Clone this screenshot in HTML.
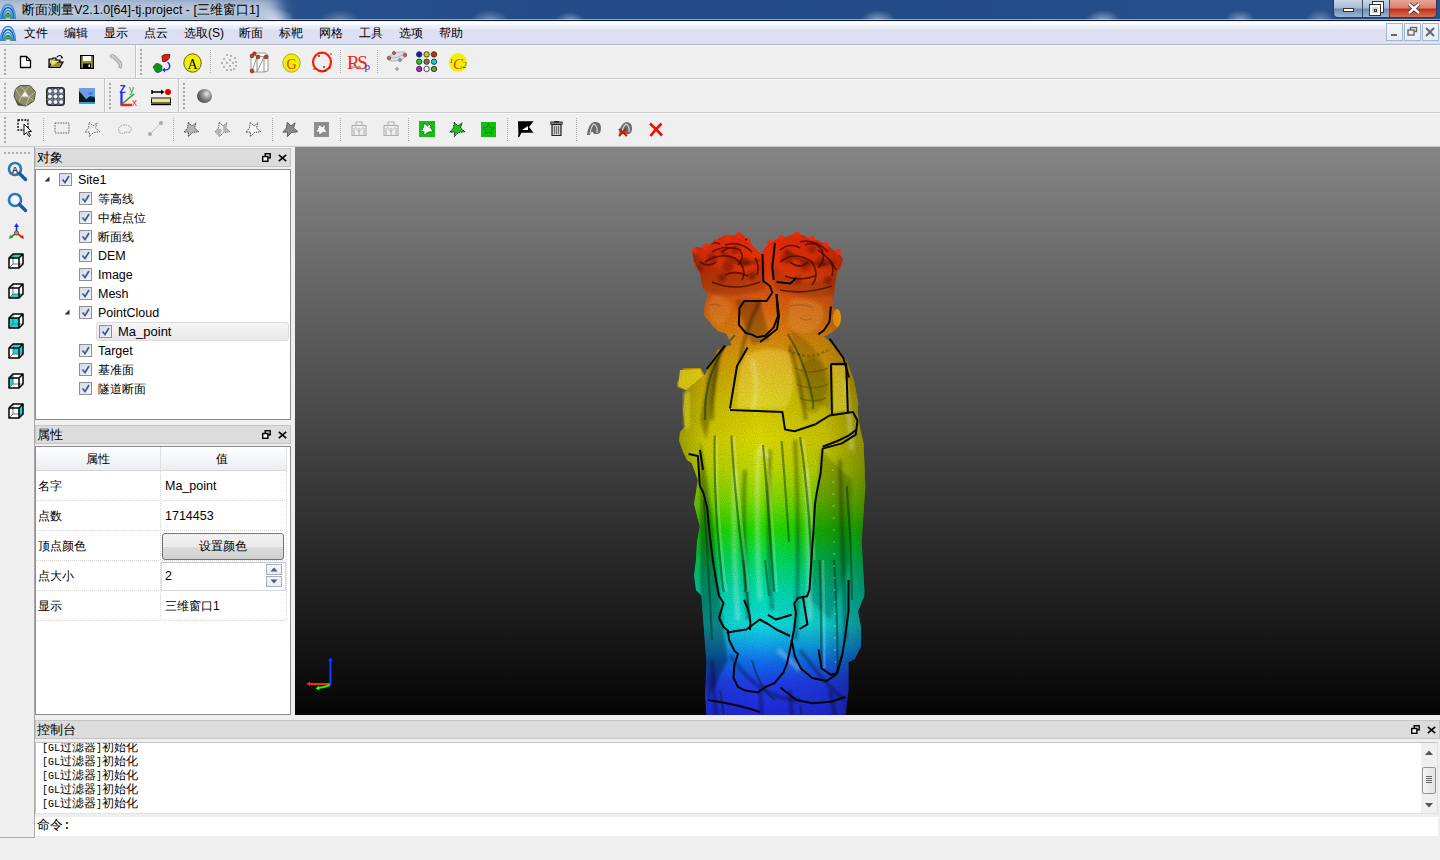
<!DOCTYPE html><html><head><meta charset="utf-8"><style>*{box-sizing:border-box;margin:0;padding:0}
html,body{width:1440px;height:860px;overflow:hidden;background:#efefef;font-family:"Liberation Sans",sans-serif;font-size:12px;color:#000}
.a{position:absolute}
svg{overflow:visible}
#title{left:0;top:0;width:1440px;height:21px;overflow:hidden;background:linear-gradient(90deg,#5d7fa8 0px,#3f6698 200px,#26508c 300px,#214a86 700px,#244e8a 1100px,#27528c 1440px);border-bottom:1px solid #101a30;box-shadow:inset 0 -1px 0 #8aa4c4}
#title .glow{left:-20px;top:-4px;width:300px;height:30px;border-radius:14px;background:rgba(200,212,226,.88);filter:blur(7px)}
#title .spot{background:radial-gradient(ellipse at center,rgba(235,242,252,.9) 0%,rgba(235,242,252,0) 70%)}
#title .t{left:22px;top:3px;font-size:12.5px;color:#000;white-space:nowrap;line-height:15px}
.wbtns{left:1333px;top:0;width:104px;height:18px;border:1px solid #2b3a50;border-top:0;border-radius:0 0 5px 5px;overflow:hidden}
.wb{top:0;height:17px;background:linear-gradient(#c9d6e5 0,#a9bcd2 45%,#6f8db3 55%,#9fb5cf 100%);border-right:1px solid #3b4a60}
.wb.close{background:linear-gradient(#e8a598 0,#d9826f 45%,#c2321a 55%,#d9704d 100%);border-right:0}
#menubar{left:0;top:22px;width:1440px;height:23px;background:linear-gradient(#ffffff 0,#fbfbfe 2px,#eceff9 4px,#e8ebf7 7px,#dcdef2 8px,#dfe1f3 100%);border-bottom:1px solid #aab3c4}
.mi{top:4px;font-size:12px;white-space:nowrap;line-height:14px}
.mdib{top:23px;width:17px;height:18px;border:1px solid #a5b5c8;background:linear-gradient(#f2f6fc,#e4ecf8)}
.tb{background:#efefef}
.sepH{height:1px;background:#c9c9c9}
.grip{width:2px;background:repeating-linear-gradient(#a8a8a8 0 2px,transparent 2px 4px)}
.vsep{width:1px;background:repeating-linear-gradient(#a8a8a8 0 1px,transparent 1px 2px)}
.dtitle{background:#dcdcdc;border:1px solid #c4c4c4;height:19px}
.dtitle .tx{left:1px;top:2px;font-size:13px;line-height:14px}
.panel{background:#fff;border:1px solid #8d8d8d}
.cb{width:13px;height:13px;border:1px solid #8e8f8f;background:linear-gradient(135deg,#d5d9e2,#f4f5f8)}
.tr{font-size:12px;white-space:nowrap;line-height:14px}
.con{font-family:"Liberation Mono",monospace;font-size:12px;white-space:nowrap;line-height:14px}
.con .l{font-size:10px}
.lat{font-size:12.5px}
</style></head><body>
<div id="title" class="a"><div class="glow a"></div><div class="spot a" style="left:255px;top:8px;width:40px;height:22px;opacity:0.8"></div><div class="spot a" style="left:320px;top:10px;width:40px;height:20px;opacity:0.35"></div><div class="spot a" style="left:470px;top:10px;width:40px;height:22px;opacity:0.45"></div><div class="spot a" style="left:555px;top:12px;width:30px;height:18px;opacity:0.5"></div><div class="spot a" style="left:860px;top:10px;width:36px;height:22px;opacity:0.6"></div><div class="spot a" style="left:1085px;top:10px;width:36px;height:22px;opacity:0.6"></div><div class="spot a" style="left:1225px;top:10px;width:30px;height:20px;opacity:0.5"></div><div class="spot a" style="left:1305px;top:10px;width:30px;height:20px;opacity:0.4"></div><div class="t a">断面测量V2.1.0[64]-tj.project - [三维窗口1]</div></div>
<svg class="a" style="left:0px;top:1px;" width="17" height="20" viewBox="0 0 17 20"><path d="M0.5 18 A7.5 14.5 0 0 1 15.5 18" fill="none" stroke="#3a8ee0" stroke-width="1.5"/><path d="M2.0 18 A6.0 11.5 0 0 1 14.0 18" fill="none" stroke="#1c64b8" stroke-width="1.5"/><path d="M3.4000000000000004 18 A4.6 8.5 0 0 1 12.6 18" fill="none" stroke="#3a8ee0" stroke-width="1.4"/><path d="M4.8 18 A3.2 5.5 0 0 1 11.2 18" fill="none" stroke="#1c64b8" stroke-width="1.3"/><ellipse cx="8" cy="14.8" rx="3.6" ry="1.9" fill="#34a83a"/></svg>
<div class="a wbtns"><div class="a wb" style="left:0;width:29px"><div class="a" style="left:9px;top:8px;width:11px;height:4px;background:#fff;border:1px solid #333"></div></div><div class="a wb" style="left:29px;width:27px"><div class="a" style="left:10px;top:2px;width:10px;height:10px;border:2px solid #fff;outline:1px solid #333"></div><div class="a" style="left:7px;top:5px;width:10px;height:10px;background:#cfd6de;border:2px solid #fff;outline:1px solid #333"><div class="a" style="left:2px;top:2px;width:3px;height:3px;border:1px solid #333"></div></div></div><div class="a wb close" style="left:56px;width:48px"><svg class="a" style="left:17px;top:3px" width="14" height="11" viewBox="0 0 14 11"><path d="M2 1 L12 10 M12 1 L2 10" stroke="#333" stroke-width="4"/><path d="M2 1 L12 10 M12 1 L2 10" stroke="#fff" stroke-width="2.4"/></svg></div></div>
<div id="menubar" class="a">
<div class="mi a" style="left:24px">文件</div>
<div class="mi a" style="left:64px">编辑</div>
<div class="mi a" style="left:104px">显示</div>
<div class="mi a" style="left:144px">点云</div>
<div class="mi a" style="left:184px">选取(S)</div>
<div class="mi a" style="left:239px">断面</div>
<div class="mi a" style="left:279px">标靶</div>
<div class="mi a" style="left:319px">网格</div>
<div class="mi a" style="left:359px">工具</div>
<div class="mi a" style="left:399px">选项</div>
<div class="mi a" style="left:439px">帮助</div>
</div>
<svg class="a" style="left:0px;top:23px;" width="17" height="20" viewBox="0 0 17 20"><path d="M0.5 18 A7.5 14.5 0 0 1 15.5 18" fill="none" stroke="#3a8ee0" stroke-width="1.5"/><path d="M2.0 18 A6.0 11.5 0 0 1 14.0 18" fill="none" stroke="#1c64b8" stroke-width="1.5"/><path d="M3.4000000000000004 18 A4.6 8.5 0 0 1 12.6 18" fill="none" stroke="#3a8ee0" stroke-width="1.4"/><path d="M4.8 18 A3.2 5.5 0 0 1 11.2 18" fill="none" stroke="#1c64b8" stroke-width="1.3"/><ellipse cx="8" cy="14.8" rx="3.6" ry="1.9" fill="#34a83a"/></svg>
<div class="a mdib" style="left:1386px"></div>
<div class="a mdib" style="left:1404px"></div>
<div class="a mdib" style="left:1422px"></div>
<div class="a" style="left:1391px;top:34px;width:6px;height:2px;background:#666"></div>
<svg class="a" style="left:1407px;top:26px" width="11" height="10" viewBox="0 0 11 10"><rect x="3.5" y="1.5" width="6" height="4" fill="none" stroke="#666" stroke-width="1.4"/><rect x="1" y="4" width="6" height="5" fill="#eef3fa" stroke="#666" stroke-width="1.4"/></svg>
<svg class="a" style="left:1425px;top:27px" width="10" height="10" viewBox="0 0 10 10"><path d="M1 1L9 9M9 1L1 9" stroke="#666" stroke-width="2"/></svg>
<div class="a tb" style="left:0;top:45px;width:1440px;height:102px"></div>
<div class="a sepH" style="left:0;top:78px;width:1440px"></div>
<div class="a" style="left:0;top:79px;width:1440px;height:1px;background:#fbfbfb"></div>
<div class="a sepH" style="left:0;top:112px;width:1440px"></div>
<div class="a" style="left:0;top:113px;width:1440px;height:1px;background:#fbfbfb"></div>
<div class="a sepH" style="left:0;top:146px;width:1440px"></div>
<div class="a" style="left:0;top:147px;width:1440px;height:1px;background:#fbfbfb"></div>
<div class="a" style="left:0;top:45px;width:1440px;height:1px;background:#fafafa"></div>
<div class="a grip" style="left:4px;top:49px;height:26px"></div>
<div class="a" style="left:135px;top:45px;width:1px;height:33px;background:#c4c4c4"></div><div class="a" style="left:136px;top:45px;width:1px;height:33px;background:#fcfcfc"></div>
<div class="a grip" style="left:140px;top:49px;height:26px"></div>
<div class="a vsep" style="left:210px;top:50px;height:24px"></div>
<div class="a vsep" style="left:340px;top:50px;height:24px"></div>
<div class="a vsep" style="left:377px;top:50px;height:24px"></div>
<div class="a grip" style="left:4px;top:83px;height:26px"></div>
<div class="a" style="left:104px;top:79px;width:1px;height:33px;background:#c4c4c4"></div><div class="a" style="left:105px;top:79px;width:1px;height:33px;background:#fcfcfc"></div>
<div class="a grip" style="left:109px;top:83px;height:26px"></div>
<div class="a" style="left:178px;top:79px;width:1px;height:33px;background:#c4c4c4"></div><div class="a" style="left:179px;top:79px;width:1px;height:33px;background:#fcfcfc"></div>
<div class="a grip" style="left:183px;top:83px;height:26px"></div>
<div class="a grip" style="left:4px;top:117px;height:26px"></div>
<div class="a vsep" style="left:43px;top:118px;height:24px"></div>
<div class="a vsep" style="left:173px;top:118px;height:24px"></div>
<div class="a vsep" style="left:272px;top:118px;height:24px"></div>
<div class="a vsep" style="left:340px;top:118px;height:24px"></div>
<div class="a vsep" style="left:408px;top:118px;height:24px"></div>
<div class="a vsep" style="left:507px;top:118px;height:24px"></div>
<div class="a vsep" style="left:576px;top:118px;height:24px"></div>
<svg class="a" style="left:19px;top:55px;" width="13" height="14" viewBox="0 0 13 14"><path d="M1.5 1.5 H7.5 L11.5 5.5 V12.5 H1.5 Z" fill="#fff" stroke="#000" stroke-width="1.3" stroke-linejoin="round"/><path d="M7.5 1.5 V5.5 H11.5" fill="none" stroke="#000" stroke-width="1"/></svg>
<svg class="a" style="left:48px;top:54px;" width="16" height="15" viewBox="0 0 16 15"><path d="M1 13.5 V5 H4 L5 4 H8 V6 H12 V8" fill="#b8b86a" stroke="#000" stroke-width="1.2"/><path d="M1 13.5 L4 8 H15 L12 13.5 Z" fill="#99922e" stroke="#000" stroke-width="1.2"/><path d="M2 7 H11 L4 12" fill="#e0e070"/><path d="M9 3 Q12 0 14 3" fill="none" stroke="#000" stroke-width="1.2"/><path d="M12.5 3 L15 3 L14 5 Z" fill="#000"/></svg>
<svg class="a" style="left:80px;top:55px;" width="14" height="14" viewBox="0 0 14 14"><rect x="0.6" y="0.6" width="12.8" height="12.8" fill="#9a8f2a" stroke="#000" stroke-width="1.2"/><rect x="3" y="1" width="8" height="5" fill="#fff"/><rect x="3" y="8.5" width="8" height="4.5" fill="#000"/><rect x="8.5" y="9.5" width="1.5" height="2.5" fill="#fff"/></svg>
<svg class="a" style="left:108px;top:53px;" width="16" height="17" viewBox="0 0 16 17"><path d="M2 3 Q4 0 7 3 L12 8 Q15 11 13 15 L11 14 Q12 11 9.5 9 L5 5 Q3 5 2 3Z" fill="#d6d6d6" stroke="#a8a8a8" stroke-width="1.2"/></svg>
<svg class="a" style="left:152px;top:53px;" width="20" height="21" viewBox="0 0 20 21"><path d="M10 3 Q12 0.5 18 1.5 Q18 6 14 8.5 L10.5 8.5 Z" fill="#e02000" stroke="#6a1000" stroke-width="0.8"/><path d="M1 14 L4 10.5 Q7 10 10 13 L9.5 18 Q6 20.5 4 19 Z" fill="#109010" stroke="#063" stroke-width="0.8"/><path d="M15.5 9 Q19 12 17 15.5 Q15 17.5 11.5 17" fill="none" stroke="#1830ff" stroke-width="1.5"/><path d="M10 17 L13 14.5 L13 19.5 Z" fill="#1830ff"/></svg>
<svg class="a" style="left:183px;top:53px;" width="19" height="20" viewBox="0 0 19 20"><ellipse cx="9.5" cy="10" rx="8.7" ry="9.2" fill="#f0f000" stroke="#505000" stroke-width="0.9"/><text x="9.6" y="15.5" text-anchor="middle" font-family="Liberation Serif" font-size="14" fill="#000">A</text></svg>
<svg class="a" style="left:220px;top:53px;" width="18" height="19" viewBox="0 0 18 19"><circle cx="7" cy="2" r="0.9" fill="#9a9a9a"/><circle cx="11" cy="3" r="0.9" fill="#9a9a9a"/><circle cx="15" cy="5" r="0.9" fill="#9a9a9a"/><circle cx="4" cy="6" r="0.9" fill="#9a9a9a"/><circle cx="10" cy="7" r="0.9" fill="#9a9a9a"/><circle cx="16" cy="9" r="0.9" fill="#9a9a9a"/><circle cx="2" cy="10" r="0.9" fill="#9a9a9a"/><circle cx="7" cy="10" r="0.9" fill="#9a9a9a"/><circle cx="13" cy="10" r="0.9" fill="#9a9a9a"/><circle cx="4" cy="14" r="0.9" fill="#9a9a9a"/><circle cx="10" cy="13" r="0.9" fill="#9a9a9a"/><circle cx="16" cy="13" r="0.9" fill="#9a9a9a"/><circle cx="7" cy="17" r="0.9" fill="#9a9a9a"/><circle cx="11" cy="17" r="0.9" fill="#9a9a9a"/><circle cx="14" cy="16" r="0.9" fill="#9a9a9a"/></svg>
<svg class="a" style="left:249px;top:50px;" width="23" height="24" viewBox="0 0 23 24"><path d="M4 3 L16 3 Q19 4 19 6 L19 21 L15 22 L3 22 Q2 21 2 20 L2 5 Z" fill="#fbfbfb" stroke="#9a9a9a" stroke-width="1"/><path d="M3 21 L8 7 M8 7 L8 22 M8 22 L15 7 M15 7 L19 5 M6 5 L15 7 M15 7 V22 M4 3 L8 7" fill="none" stroke="#888" stroke-width="0.9"/><circle cx="3" cy="6" r="1.9" fill="#d04020" stroke="#602010" stroke-width=".6"/><circle cx="5.5" cy="3.5" r="1.7" fill="#d04020" stroke="#602010" stroke-width=".6"/><circle cx="9" cy="7" r="1.9" fill="#d04020" stroke="#602010" stroke-width=".6"/><circle cx="17" cy="7" r="1.9" fill="#d04020" stroke="#602010" stroke-width=".6"/><circle cx="3" cy="21" r="1.9" fill="#d04020" stroke="#602010" stroke-width=".6"/></svg>
<svg class="a" style="left:282px;top:53px;" width="19" height="20" viewBox="0 0 19 20"><ellipse cx="9.5" cy="10" rx="8.7" ry="9.2" fill="#f0f000" stroke="#8a8a20" stroke-width="0.7"/><text x="9.5" y="15.5" text-anchor="middle" font-family="Liberation Serif" font-size="14" fill="#e04000">G</text></svg>
<svg class="a" style="left:311px;top:51px;" width="22" height="22" viewBox="0 0 22 22"><ellipse cx="11" cy="11" rx="9" ry="9.3" fill="none" stroke="#ff1a00" stroke-width="2.2"/><circle cx="8" cy="5" r=".9" fill="#333"/><circle cx="13" cy="16" r=".9" fill="#333"/><circle cx="20" cy="3" r=".8" fill="#333"/><circle cx="3" cy="18" r=".8" fill="#333"/><circle cx="19" cy="17" r=".8" fill="#333"/><circle cx="14" cy="20" r=".8" fill="#333"/></svg>
<svg class="a" style="left:347px;top:52px;" width="26" height="20" viewBox="0 0 26 20"><text x="0" y="17" font-family="Liberation Serif" font-size="19" fill="#f02010" letter-spacing="-2.5">RS</text><text x="17.5" y="18" font-family="Liberation Serif" font-size="11" fill="#1a1aff">p</text><path d="M4 15 L14 15" stroke="#999" stroke-width="1.4"/></svg>
<svg class="a" style="left:385px;top:50px;" width="23" height="22" viewBox="0 0 23 22"><path d="M3 7 Q8 2 15 2 Q21 1 21.5 5 Q19 10 10 11 Q4 11.5 3 9 Z" fill="#dadde6" stroke="#aaa" stroke-width=".8"/><path d="M4 8 Q12 9 20 4" fill="none" stroke="#bbb" stroke-width="1"/><circle cx="4" cy="8" r="1.8" fill="#d06040" stroke="#555" stroke-width=".7"/><circle cx="9" cy="3" r="1.6" fill="#d06040" stroke="#555" stroke-width=".7"/><circle cx="20" cy="5" r="1.8" fill="#d06040" stroke="#555" stroke-width=".7"/><circle cx="15" cy="10" r="1.5" fill="#aaa" stroke="#666" stroke-width=".7"/><circle cx="12" cy="19" r="1.3" fill="#ddd" stroke="#777" stroke-width=".8"/></svg>
<svg class="a" style="left:416px;top:51px;" width="22" height="22" viewBox="0 0 22 22"><circle cx="3.2" cy="3.4" r="2.7" fill="#1010e0" stroke="#333" stroke-width="0.9"/><circle cx="10.600000000000001" cy="3.4" r="2.7" fill="#d0d000" stroke="#333" stroke-width="0.9"/><circle cx="18.0" cy="3.4" r="2.7" fill="#e02000" stroke="#333" stroke-width="0.9"/><circle cx="3.2" cy="10.7" r="2.7" fill="#10d010" stroke="#333" stroke-width="0.9"/><circle cx="10.600000000000001" cy="10.7" r="2.7" fill="#8a6a4a" stroke="#333" stroke-width="0.9"/><circle cx="18.0" cy="10.7" r="2.7" fill="#10d0d0" stroke="#333" stroke-width="0.9"/><circle cx="3.2" cy="18.0" r="2.7" fill="#b020d0" stroke="#333" stroke-width="0.9"/><circle cx="10.600000000000001" cy="18.0" r="2.7" fill="#ffffff" stroke="#333" stroke-width="0.9"/><circle cx="18.0" cy="18.0" r="2.7" fill="#50a050" stroke="#333" stroke-width="0.9"/></svg>
<svg class="a" style="left:448px;top:52px;" width="20" height="21" viewBox="0 0 20 21"><ellipse cx="10" cy="10.5" rx="9" ry="9.5" fill="#f0f000"/><text x="10" y="16.5" text-anchor="middle" font-family="Liberation Serif" font-style="italic" font-size="15" fill="#e04000">C</text><text x="1.5" y="11" font-family="Liberation Serif" font-style="italic" font-size="7" fill="#4040c0">1</text><text x="14.5" y="16" font-family="Liberation Serif" font-style="italic" font-size="8" fill="#4040c0">2</text></svg>
<svg class="a" style="left:13px;top:84px;" width="24" height="23" viewBox="0 0 24 23"><path d="M7 1.5 L17 1.5 L22.5 8 L21 17 L13 22 L5 21 L1 12 L2.5 5 Z" fill="#8e8a6a" stroke="#55533a" stroke-width="1"/><path d="M7 1.5 L12 7 L17 1.5 M12 7 L8 13 L16 13 Z M2.5 5 L8 13 M22.5 8 L16 13 M8 13 L5 21 M16 13 L13 22 M16 13 L21 17" fill="none" stroke="#c8c6a8" stroke-width=".8"/><path d="M12 7.5 L8.5 12.5 L15.5 12.5 Z" fill="#f4f4f0"/><path d="M1 12 Q5 20 13 22 L5 21Z" fill="#55533a"/></svg>
<svg class="a" style="left:46px;top:87px;" width="19" height="19" viewBox="0 0 19 19"><rect x="0.5" y="0.5" width="18" height="18" rx="2.5" fill="#404452" stroke="#2a2a33"/><path d="M6.7 1 V18 M12.3 1 V18 M1 6.7 H18 M1 12.3 H18" stroke="#7a7e90" stroke-width="1"/><circle cx="3.9" cy="3.9" r="2" fill="#f0f2ff"/><circle cx="9.5" cy="3.9" r="2" fill="#f0f2ff"/><circle cx="15.1" cy="3.9" r="2" fill="#f0f2ff"/><circle cx="3.9" cy="9.5" r="2" fill="#f0f2ff"/><circle cx="9.5" cy="9.5" r="2" fill="#f0f2ff"/><circle cx="15.1" cy="9.5" r="2" fill="#f0f2ff"/><circle cx="3.9" cy="15.1" r="2" fill="#f0f2ff"/><circle cx="9.5" cy="15.1" r="2" fill="#f0f2ff"/><circle cx="15.1" cy="15.1" r="2" fill="#f0f2ff"/></svg>
<svg class="a" style="left:79px;top:88px;" width="16" height="16" viewBox="0 0 16 16"><rect x="0" y="0" width="16" height="16" fill="#1a3450"/><path d="M0 0 H16 V9 L11 8 L7 11 L3 6 L0 3Z" fill="#6aa0e0"/><path d="M0 4 L4 8 L7 12 L11 9 L16 11 V16 H0Z" fill="#0a1a1a"/><path d="M0 14 H16 V16 H0Z" fill="#2aa0e0"/><text x="9" y="7" font-size="6" fill="#3050ff">ar</text></svg>
<svg class="a" style="left:119px;top:84px;" width="23" height="23" viewBox="0 0 23 23"><path d="M2.5 7 V20.5 H13" fill="none" stroke="#e02020" stroke-width="0"/><path d="M2.5 8 V21" stroke="#1a2aff" stroke-width="2.2"/><path d="M1.5 21 H13" stroke="#ee2020" stroke-width="2.5"/><path d="M3 20 L15 10" stroke="#20a020" stroke-width="1.5"/><text x="0.5" y="9" font-size="10" font-weight="bold" fill="#1a2aff">Z</text><text x="10" y="9" font-size="10" fill="#20a020">y</text><text x="13" y="22" font-size="10" fill="#ee3030">x</text></svg>
<svg class="a" style="left:151px;top:86px;" width="21" height="20" viewBox="0 0 21 20"><path d="M1 4 V8 M1 6 H11" stroke="#000" stroke-width="1.5"/><path d="M10 3.5 L13.5 6 L10 8.5Z" fill="#000"/><circle cx="17" cy="6" r="3" fill="#e00000"/><rect x="0.5" y="12" width="19" height="5" fill="#e8e880" stroke="#000" stroke-width="1"/><path d="M0 12 H20" stroke="#888" stroke-width="1.2"/><path d="M0 18.5 H20" stroke="#000" stroke-width="1.4"/></svg>
<div class="a" style="left:197px;top:89px;width:15px;height:14px;border-radius:50%;background:radial-gradient(circle at 65% 35%,#e8e8e8 0,#909090 35%,#3a3a3a 85%,#2a2a2a 100%)"></div>
<svg class="a" style="left:17px;top:119px;" width="17" height="18" viewBox="0 0 17 18"><rect x="1" y="1" width="10" height="10" fill="none" stroke="#000" stroke-width="1.3" stroke-dasharray="2 1.2"/><path d="M7 5 L7 16 L9.5 13.5 L12 17.5 L13.5 16.5 L11.2 12.5 L14.5 12.5 Z" fill="#fff" stroke="#000" stroke-width="1"/></svg>
<svg class="a" style="left:54px;top:122px;" width="16" height="13" viewBox="0 0 16 13"><rect x="1" y="1" width="14" height="10" fill="none" stroke="#666" stroke-width="1" stroke-dasharray="1.6 1"/></svg>
<svg class="a" style="left:84px;top:121px;" width="17" height="17" viewBox="0 0 17 17"><path d="M5.3 1.2 L9 5 L13.1 1.8 L11.5 7 L15.9 10.7 L9.5 11.5 L5.3 15.7 L5.5 11 L0.9 11.2 L4.5 7 Z" fill="none" stroke="#666" stroke-width="1" stroke-dasharray="1.6 1"/></svg>
<svg class="a" style="left:117px;top:124px;" width="16" height="12" viewBox="0 0 16 12"><path d="M3 9 Q0 5 3 2.5 Q8 -0.5 13 2.5 Q15.5 5 13 8 Q11 9 10 8 Q8 7 8 9 Q5 10 3 9Z" fill="none" stroke="#999" stroke-width="1" stroke-dasharray="1.6 1"/></svg>
<svg class="a" style="left:147px;top:120px;" width="17" height="17" viewBox="0 0 17 17"><path d="M3 14 L14 3" stroke="#aaa" stroke-width="1" stroke-dasharray="1.6 1"/><circle cx="3" cy="14" r="2" fill="#aaa"/><circle cx="14" cy="3" r="2" fill="#aaa"/></svg>
<svg class="a" style="left:183px;top:121px;" width="17" height="17" viewBox="0 0 17 17"><path d="M5.3 1.2 L9 5 L13.1 1.8 L11.5 7 L15.9 10.7 L9.5 11.5 L5.3 15.7 L5.5 11 L0.9 11.2 L4.5 7 Z" fill="#b4b4b4" stroke="#505050" stroke-width="1" stroke-dasharray="1.5 .8"/></svg>
<svg class="a" style="left:214px;top:121px;" width="17" height="17" viewBox="0 0 17 17"><path d="M5.3 1.2 L9 5 L13.1 1.8 L11.5 7 L15.9 10.7 L9.5 11.5 L5.3 15.7 L5.5 11 L0.9 11.2 L4.5 7 Z" fill="#f2f2f2" stroke="#505050" stroke-width="1" stroke-dasharray="1.5 .8"/><path d="M9 5 L13.1 1.8 L11.5 7 L15.9 10.7 L9.5 11.5 Z" fill="#b4b4b4"/><path d="M0.9 11.2 L4.5 7 L8 9 L5.3 15.7 Z" fill="#b4b4b4"/></svg>
<svg class="a" style="left:245px;top:121px;" width="17" height="17" viewBox="0 0 17 17"><path d="M5.3 1.2 L9 5 L13.1 1.8 L11.5 7 L15.9 10.7 L9.5 11.5 L5.3 15.7 L5.5 11 L0.9 11.2 L4.5 7 Z" fill="#f6f6f6" stroke="#505050" stroke-width="1" stroke-dasharray="1.5 .8"/></svg>
<svg class="a" style="left:282px;top:121px;" width="17" height="17" viewBox="0 0 17 17"><path d="M5.3 1.2 L9 5 L13.1 1.8 L11.5 7 L15.9 10.7 L9.5 11.5 L5.3 15.7 L5.5 11 L0.9 11.2 L4.5 7 Z" fill="#8c8c8c" stroke="#606060" stroke-width="1"/></svg>
<svg class="a" style="left:314px;top:122px;" width="15" height="15" viewBox="0 0 15 15"><rect x="0" y="0" width="15" height="15" fill="#8e8e8e"/><path d="M5 2.5 L8 5 L11.5 2.5 L10.5 6.5 L13 10 L8.5 10.5 L5 13 L5 10 L2 10 L4 6.5 Z" fill="#f8f8f8" stroke="#555" stroke-dasharray="1 1" stroke-width=".8"/></svg>
<svg class="a" style="left:351px;top:120px;" width="16" height="17" viewBox="0 0 16 17"><rect x="1" y="5.5" width="14" height="10" fill="none" stroke="#aaa" stroke-width="1"/><path d="M1 15.5 H15 M3 8 V15 M8 8 V15 M13 8 V15 M5 5 V2 H11 V5" fill="none" stroke="#b0b0b0" stroke-width="1"/><path d="M4 7 L8 12 L12 7" fill="none" stroke="#bbb"/></svg>
<svg class="a" style="left:383px;top:120px;" width="16" height="17" viewBox="0 0 16 17"><rect x="1" y="5.5" width="14" height="10" fill="none" stroke="#aaa" stroke-width="1"/><path d="M1 15.5 H15 M3 8 V15 M8 8 V15 M13 8 V15 M5 5 V2 H11 V5" fill="none" stroke="#b0b0b0" stroke-width="1"/><path d="M4 7 L8 12 L12 7" fill="none" stroke="#bbb"/></svg>
<svg class="a" style="left:419px;top:121px;" width="16" height="16" viewBox="0 0 16 16"><rect x="0" y="0" width="16" height="16" fill="#10c010"/><path d="M5 2.5 L8.5 5 L12 2.5 L11 6.5 L14 10.5 L9 11 L5 14 L5 10.5 L2 10.5 L4.5 6.5 Z" fill="#fff" stroke="#333" stroke-width=".9" stroke-dasharray="1.2 .8"/></svg>
<svg class="a" style="left:449px;top:121px;" width="17" height="17" viewBox="0 0 17 17"><path d="M5.3 1.2 L9 5 L13.1 1.8 L11.5 7 L15.9 10.7 L9.5 11.5 L5.3 15.7 L5.5 11 L0.9 11.2 L4.5 7 Z" fill="#20c020" stroke="#111" stroke-width="1" stroke-dasharray="1.5 .9"/></svg>
<svg class="a" style="left:481px;top:122px;" width="15" height="15" viewBox="0 0 15 15"><rect x="0" y="0" width="15" height="15" fill="#10c010"/><path d="M7.5 2 L9 5.5 L13 5.7 L10 8.2 L11 12 L7.5 10 L4 12 L5 8.2 L2 5.7 L6 5.5 Z" fill="none" stroke="#0a5a0a" stroke-width=".9" stroke-dasharray="1.2 .8"/></svg>
<svg class="a" style="left:517px;top:121px;" width="17" height="17" viewBox="0 0 17 17"><path d="M1 1 H15 L11 6 L15 11 H4 L1.5 16" fill="#000" stroke="#000" stroke-width="1.5"/><path d="M5 9 L11 5 V9Z" fill="#fff"/></svg>
<svg class="a" style="left:550px;top:121px;" width="13" height="16" viewBox="0 0 13 16"><rect x="0.8" y="1" width="11.4" height="2.2" fill="#999" stroke="#222" stroke-width=".9"/><rect x="4" y="0" width="5" height="1.5" fill="#222"/><path d="M2 3.5 H11 V14.5 H2Z" fill="#c8c8c8" stroke="#222" stroke-width="1.2"/><path d="M4.5 5 V13 M6.5 5 V13 M8.5 5 V13" stroke="#666" stroke-width=".9"/></svg>
<svg class="a" style="left:586px;top:121px;" width="16" height="15" viewBox="0 0 16 15"><path d="M1 14 Q2 3 8 1 Q15 0 15 7 Q15 12 12 13 L8 13 Q6 8 4 14 Z" fill="#6a6a6a"/><path d="M4 13 Q5 5 8 3 M8 3 Q12 5 11 12" fill="none" stroke="#cfcfcf" stroke-width="1.3"/></svg>
<svg class="a" style="left:617px;top:121px;" width="16" height="16" viewBox="0 0 16 16"><path d="M2 13 Q3 3 9 1 Q15 1 15 7 Q15 12 12 13 L8 13 Z" fill="#6a6a6a"/><path d="M5 12 Q6 5 9 3 Q13 5 12 11" fill="none" stroke="#cfcfcf" stroke-width="1.3"/><path d="M2 8 L10 15 M9 8 L2 15" stroke="#e01000" stroke-width="2"/></svg>
<svg class="a" style="left:648px;top:122px;" width="16" height="15" viewBox="0 0 16 15"><path d="M2 1.5 Q8 7 14 13.5 M13.5 1.5 Q7 8 2.5 14" fill="none" stroke="#e81000" stroke-width="2.6"/></svg>
<div class="a" style="left:0;top:147px;width:34px;height:690px;background:#efefef"></div>
<div class="a" style="left:34px;top:147px;width:1px;height:691px;background:#a9a9a9"></div>
<div class="a" style="left:0;top:837px;width:35px;height:1px;background:#a9a9a9"></div>
<div class="a" style="left:4px;top:152px;width:26px;height:2px;background:repeating-linear-gradient(90deg,#b0b0b0 0 2px,transparent 2px 4px)"></div>
<svg class="a" style="left:7px;top:161px;" width="21" height="21" viewBox="0 0 21 21"><circle cx="8" cy="8" r="6" fill="#eef4f8" stroke="#2a7ab8" stroke-width="2.6"/><path d="M12.5 12.5 L18.5 18.5" stroke="#1a5a98" stroke-width="3.4" stroke-linecap="round"/><text x="8" y="11.5" text-anchor="middle" font-size="9" font-weight="bold" fill="#333">A</text></svg>
<svg class="a" style="left:7px;top:192px;" width="21" height="21" viewBox="0 0 21 21"><circle cx="8" cy="8" r="6" fill="#f4f8fb" stroke="#2a7ab8" stroke-width="2.6"/><path d="M12.5 12.5 L18.5 18.5" stroke="#1a5a98" stroke-width="3.4" stroke-linecap="round"/></svg>
<svg class="a" style="left:8px;top:223px;" width="17" height="17" viewBox="0 0 17 17"><path d="M8.5 10 V3" stroke="#1a2aff" stroke-width="1.6"/><path d="M6 4 L8.5 0 L11 4Z" fill="#1a2aff"/><path d="M8.5 10 L3 14" stroke="#20a020" stroke-width="1.6"/><path d="M1 16 L2 12 L5 14.5Z" fill="#20a020"/><path d="M8.5 10 L14 14" stroke="#e02000" stroke-width="1.6"/><path d="M16 16 L12 14.5 L15 12Z" fill="#e02000"/><circle cx="8.5" cy="10" r="2.2" fill="#b0a020" stroke="#333" stroke-width=".6"/></svg>
<svg class="a" style="left:8px;top:253px;" width="17" height="17" viewBox="0 0 17 17"><path d="M1 5 L5 1 H15 V11 L11 15 H1 Z" fill="#fff"/><path d="M1 5 L5 1 H15 L11 5Z" fill="#12d8dc"/><path d="M5 1 V11 H15 M5 11 L1 15" fill="none" stroke="#666" stroke-width=".9"/><path d="M1 5 L5 1 H15 V11 L11 15 H1 Z M1 5 H11 V15 M11 5 L15 1" fill="none" stroke="#000" stroke-width="1.5" stroke-linejoin="round"/></svg>
<svg class="a" style="left:8px;top:283px;" width="17" height="17" viewBox="0 0 17 17"><path d="M1 5 L5 1 H15 V11 L11 15 H1 Z" fill="#fff"/><path d="M1 15 L5 11 H15 L11 15Z" fill="#12d8dc"/><path d="M5 1 V11 H15 M5 11 L1 15" fill="none" stroke="#666" stroke-width=".9"/><path d="M1 5 L5 1 H15 V11 L11 15 H1 Z M1 5 H11 V15 M11 5 L15 1" fill="none" stroke="#000" stroke-width="1.5" stroke-linejoin="round"/></svg>
<svg class="a" style="left:8px;top:313px;" width="17" height="17" viewBox="0 0 17 17"><path d="M1 5 L5 1 H15 V11 L11 15 H1 Z" fill="#fff"/><path d="M1 5 H11 V15 H1Z" fill="#12d8dc"/><path d="M5 1 V11 H15 M5 11 L1 15" fill="none" stroke="#666" stroke-width=".9"/><path d="M1 5 L5 1 H15 V11 L11 15 H1 Z M1 5 H11 V15 M11 5 L15 1" fill="none" stroke="#000" stroke-width="1.5" stroke-linejoin="round"/></svg>
<svg class="a" style="left:8px;top:343px;" width="17" height="17" viewBox="0 0 17 17"><path d="M1 5 L5 1 H15 V11 L11 15 H1 Z" fill="#fff"/><path d="M5 1 H15 V11 H5Z" fill="#12d8dc"/><path d="M5 1 V11 H15 M5 11 L1 15" fill="none" stroke="#666" stroke-width=".9"/><path d="M1 5 L5 1 H15 V11 L11 15 H1 Z M1 5 H11 V15 M11 5 L15 1" fill="none" stroke="#000" stroke-width="1.5" stroke-linejoin="round"/></svg>
<svg class="a" style="left:8px;top:373px;" width="17" height="17" viewBox="0 0 17 17"><path d="M1 5 L5 1 H15 V11 L11 15 H1 Z" fill="#fff"/><path d="M1 5 L5 1 V11 L1 15Z" fill="#12d8dc"/><path d="M5 1 V11 H15 M5 11 L1 15" fill="none" stroke="#666" stroke-width=".9"/><path d="M1 5 L5 1 H15 V11 L11 15 H1 Z M1 5 H11 V15 M11 5 L15 1" fill="none" stroke="#000" stroke-width="1.5" stroke-linejoin="round"/></svg>
<svg class="a" style="left:8px;top:403px;" width="17" height="17" viewBox="0 0 17 17"><path d="M1 5 L5 1 H15 V11 L11 15 H1 Z" fill="#fff"/><path d="M11 5 L15 1 V11 L11 15Z" fill="#12d8dc"/><path d="M5 1 V11 H15 M5 11 L1 15" fill="none" stroke="#666" stroke-width=".9"/><path d="M1 5 L5 1 H15 V11 L11 15 H1 Z M1 5 H11 V15 M11 5 L15 1" fill="none" stroke="#000" stroke-width="1.5" stroke-linejoin="round"/></svg>
<div class="a dtitle" style="left:35px;top:148px;width:256px"><div class="tx a">对象</div></div>
<svg class="a" style="left:262px;top:153px" width="9" height="9" viewBox="0 0 9 9"><rect x="3.2" y="0.7" width="5" height="4.2" fill="none" stroke="#000" stroke-width="1.4"/><rect x="0.7" y="3.5" width="5.2" height="4.8" fill="#f4f4f4" stroke="#000" stroke-width="1.4"/></svg>
<svg class="a" style="left:278px;top:154px" width="9" height="8" viewBox="0 0 9 8"><path d="M0.8 0.8L8.2 7.2M8.2 0.8L0.8 7.2" stroke="#000" stroke-width="1.6"/></svg>
<div class="a panel" style="left:35px;top:169px;width:256px;height:251px"></div>
<svg class="a" style="left:44px;top:176px;" width="6" height="6" viewBox="0 0 6 6"><path d="M5.5 0.5 V5.5 H0.5Z" fill="#303030"/></svg>
<div class="a cb" style="left:59px;top:173px"></div>
<svg class="a" style="left:61px;top:175px;" width="9" height="9" viewBox="0 0 9 9"><path d="M1.5 4.5 L4 7.5 L8 1" fill="none" stroke="#3b5a98" stroke-width="1.7"/></svg>
<div class="a tr lat" style="left:78px;top:173px">Site1</div>
<div class="a cb" style="left:79px;top:192px"></div>
<svg class="a" style="left:81px;top:194px;" width="9" height="9" viewBox="0 0 9 9"><path d="M1.5 4.5 L4 7.5 L8 1" fill="none" stroke="#3b5a98" stroke-width="1.7"/></svg>
<div class="a tr" style="left:98px;top:192px">等高线</div>
<div class="a cb" style="left:79px;top:211px"></div>
<svg class="a" style="left:81px;top:213px;" width="9" height="9" viewBox="0 0 9 9"><path d="M1.5 4.5 L4 7.5 L8 1" fill="none" stroke="#3b5a98" stroke-width="1.7"/></svg>
<div class="a tr" style="left:98px;top:211px">中桩点位</div>
<div class="a cb" style="left:79px;top:230px"></div>
<svg class="a" style="left:81px;top:232px;" width="9" height="9" viewBox="0 0 9 9"><path d="M1.5 4.5 L4 7.5 L8 1" fill="none" stroke="#3b5a98" stroke-width="1.7"/></svg>
<div class="a tr" style="left:98px;top:230px">断面线</div>
<div class="a cb" style="left:79px;top:249px"></div>
<svg class="a" style="left:81px;top:251px;" width="9" height="9" viewBox="0 0 9 9"><path d="M1.5 4.5 L4 7.5 L8 1" fill="none" stroke="#3b5a98" stroke-width="1.7"/></svg>
<div class="a tr lat" style="left:98px;top:249px">DEM</div>
<div class="a cb" style="left:79px;top:268px"></div>
<svg class="a" style="left:81px;top:270px;" width="9" height="9" viewBox="0 0 9 9"><path d="M1.5 4.5 L4 7.5 L8 1" fill="none" stroke="#3b5a98" stroke-width="1.7"/></svg>
<div class="a tr lat" style="left:98px;top:268px">Image</div>
<div class="a cb" style="left:79px;top:287px"></div>
<svg class="a" style="left:81px;top:289px;" width="9" height="9" viewBox="0 0 9 9"><path d="M1.5 4.5 L4 7.5 L8 1" fill="none" stroke="#3b5a98" stroke-width="1.7"/></svg>
<div class="a tr lat" style="left:98px;top:287px">Mesh</div>
<div class="a cb" style="left:79px;top:306px"></div>
<svg class="a" style="left:81px;top:308px;" width="9" height="9" viewBox="0 0 9 9"><path d="M1.5 4.5 L4 7.5 L8 1" fill="none" stroke="#3b5a98" stroke-width="1.7"/></svg>
<div class="a tr lat" style="left:98px;top:306px">PointCloud</div>
<svg class="a" style="left:64px;top:309px;" width="6" height="6" viewBox="0 0 6 6"><path d="M5.5 0.5 V5.5 H0.5Z" fill="#303030"/></svg>
<div class="a" style="left:96px;top:322px;width:193px;height:19px;border:1px solid #dcdcdc;border-radius:3px;background:linear-gradient(#f6f6f6,#e8e8e8)"></div>
<div class="a cb" style="left:99px;top:325px"></div>
<svg class="a" style="left:101px;top:327px;" width="9" height="9" viewBox="0 0 9 9"><path d="M1.5 4.5 L4 7.5 L8 1" fill="none" stroke="#3b5a98" stroke-width="1.7"/></svg>
<div class="a tr lat" style="left:118px;top:325px;font-size:13px">Ma_point</div>
<div class="a cb" style="left:79px;top:344px"></div>
<svg class="a" style="left:81px;top:346px;" width="9" height="9" viewBox="0 0 9 9"><path d="M1.5 4.5 L4 7.5 L8 1" fill="none" stroke="#3b5a98" stroke-width="1.7"/></svg>
<div class="a tr lat" style="left:98px;top:344px">Target</div>
<div class="a cb" style="left:79px;top:363px"></div>
<svg class="a" style="left:81px;top:365px;" width="9" height="9" viewBox="0 0 9 9"><path d="M1.5 4.5 L4 7.5 L8 1" fill="none" stroke="#3b5a98" stroke-width="1.7"/></svg>
<div class="a tr" style="left:98px;top:363px">基准面</div>
<div class="a cb" style="left:79px;top:382px"></div>
<svg class="a" style="left:81px;top:384px;" width="9" height="9" viewBox="0 0 9 9"><path d="M1.5 4.5 L4 7.5 L8 1" fill="none" stroke="#3b5a98" stroke-width="1.7"/></svg>
<div class="a tr" style="left:98px;top:382px">隧道断面</div>
<div class="a dtitle" style="left:35px;top:425px;width:256px"><div class="tx a">属性</div></div>
<svg class="a" style="left:262px;top:430px" width="9" height="9" viewBox="0 0 9 9"><rect x="3.2" y="0.7" width="5" height="4.2" fill="none" stroke="#000" stroke-width="1.4"/><rect x="0.7" y="3.5" width="5.2" height="4.8" fill="#f4f4f4" stroke="#000" stroke-width="1.4"/></svg>
<svg class="a" style="left:278px;top:431px" width="9" height="8" viewBox="0 0 9 8"><path d="M0.8 0.8L8.2 7.2M8.2 0.8L0.8 7.2" stroke="#000" stroke-width="1.6"/></svg>
<div class="a panel" style="left:35px;top:446px;width:256px;height:269px"></div>
<div class="a" style="left:36px;top:447px;width:250px;height:24px;background:linear-gradient(#ffffff 0,#f7f8fa 40%,#eceef1 100%);border-bottom:1px solid #d5d5d5"></div>
<div class="a" style="left:160px;top:447px;width:1px;height:24px;background:#e0e0e0"></div>
<div class="a" style="left:286px;top:447px;width:1px;height:24px;background:#e0e0e0"></div>
<div class="a tr" style="left:86px;top:452px">属性</div>
<div class="a tr" style="left:216px;top:452px">值</div>
<div class="a" style="left:36px;top:500px;width:250px;height:1px;background:repeating-linear-gradient(90deg,#d4d4d4 0 1px,#fff 1px 2px)"></div>
<div class="a tr" style="left:38px;top:479px">名字</div>
<div class="a tr lat" style="left:165px;top:479px">Ma_point</div>
<div class="a" style="left:36px;top:530px;width:250px;height:1px;background:repeating-linear-gradient(90deg,#d4d4d4 0 1px,#fff 1px 2px)"></div>
<div class="a tr" style="left:38px;top:509px">点数</div>
<div class="a tr lat" style="left:165px;top:509px">1714453</div>
<div class="a" style="left:36px;top:560px;width:250px;height:1px;background:repeating-linear-gradient(90deg,#d4d4d4 0 1px,#fff 1px 2px)"></div>
<div class="a tr" style="left:38px;top:539px">顶点颜色</div>
<div class="a" style="left:36px;top:590px;width:250px;height:1px;background:repeating-linear-gradient(90deg,#d4d4d4 0 1px,#fff 1px 2px)"></div>
<div class="a tr" style="left:38px;top:569px">点大小</div>
<div class="a tr lat" style="left:165px;top:569px">2</div>
<div class="a" style="left:36px;top:620px;width:250px;height:1px;background:repeating-linear-gradient(90deg,#d4d4d4 0 1px,#fff 1px 2px)"></div>
<div class="a tr" style="left:38px;top:599px">显示</div>
<div class="a tr" style="left:165px;top:599px">三维窗口1</div>
<div class="a" style="left:160px;top:471px;width:1px;height:150px;background:repeating-linear-gradient(#d4d4d4 0 1px,#fff 1px 2px)"></div>
<div class="a" style="left:286px;top:471px;width:1px;height:150px;background:repeating-linear-gradient(#d4d4d4 0 1px,#fff 1px 2px)"></div>
<div class="a" style="left:162px;top:533px;width:122px;height:27px;border:1px solid #707070;border-radius:3px;background:linear-gradient(#f2f2f2 0,#ebebeb 50%,#dddddd 51%,#cfcfcf 100%)"></div>
<div class="a tr" style="left:199px;top:539px">设置颜色</div>
<div class="a" style="left:161px;top:562px;width:125px;height:29px;border:1px solid #d6dae2;border-top-color:#c0c4cc"></div>
<div class="a" style="left:266px;top:564px;width:16px;height:11px;border:1px solid #a8b0c0;background:linear-gradient(#f8f8f8,#e8ecf2)"></div>
<div class="a" style="left:266px;top:576px;width:16px;height:11px;border:1px solid #a8b0c0;background:linear-gradient(#f8f8f8,#e8ecf2)"></div>
<svg class="a" style="left:270px;top:567px;" width="8" height="5" viewBox="0 0 8 5"><path d="M0.5 4.5 L4 0.5 L7.5 4.5Z" fill="#4a5a78"/></svg>
<svg class="a" style="left:270px;top:579px;" width="8" height="5" viewBox="0 0 8 5"><path d="M0.5 0.5 L4 4.5 L7.5 0.5Z" fill="#4a5a78"/></svg>
<div class="a" id="view" style="left:295px;top:147px;width:1145px;height:568px;overflow:hidden;background:linear-gradient(#858585 0%,#050505 100%)">
<svg class="a" style="left:-295px;top:-147px" width="1440" height="860" viewBox="0 0 1440 860"><defs><linearGradient id="sg" gradientUnits="userSpaceOnUse" x1="0" y1="231" x2="0" y2="716"><stop offset="0.000" stop-color="#f02808"/><stop offset="0.080" stop-color="#e83808"/><stop offset="0.132" stop-color="#e05810"/><stop offset="0.204" stop-color="#e08010"/><stop offset="0.256" stop-color="#dca008"/><stop offset="0.348" stop-color="#d8c800"/><stop offset="0.431" stop-color="#e0dc00"/><stop offset="0.493" stop-color="#c0e000"/><stop offset="0.555" stop-color="#80e000"/><stop offset="0.616" stop-color="#20e000"/><stop offset="0.678" stop-color="#00e060"/><stop offset="0.740" stop-color="#00e0b0"/><stop offset="0.812" stop-color="#10e0e0"/><stop offset="0.854" stop-color="#10a8f0"/><stop offset="0.889" stop-color="#1070f0"/><stop offset="0.930" stop-color="#2040f0"/><stop offset="1.000" stop-color="#2028e0"/></linearGradient><linearGradient id="shx" gradientUnits="userSpaceOnUse" x1="676" y1="0" x2="866" y2="0"><stop offset="0" stop-color="#000" stop-opacity=".3"/><stop offset=".15" stop-color="#000" stop-opacity=".08"/><stop offset=".45" stop-color="#000" stop-opacity="0"/><stop offset=".78" stop-color="#000" stop-opacity=".1"/><stop offset="1" stop-color="#000" stop-opacity=".35"/></linearGradient><filter id="bl" x="-10%" y="-10%" width="120%" height="120%"><feGaussianBlur stdDeviation="1.8"/></filter><filter id="nz" x="0" y="0" width="100%" height="100%"><feTurbulence type="fractalNoise" baseFrequency=".9" numOctaves="1" seed="3"/><feColorMatrix values="0 0 0 0 0  0 0 0 0 0  0 0 0 0 0  0 0 0 -1.6 1.05"/></filter><clipPath id="sc"><path d="M692 251 L696 247 L705 248 L714 242 L719 238 L725 235.5 L735 235.5 L740 232.7 L746 238 L755.5 248.7 L761 254 L765 247 L774 240 L785 237 L796 233.4 L804 235.5 L810 239 L818 240.3 L828 246 L839 254 L843 258.5 L841 267 L837 272.4 L835 286 L832.5 307 L836 309 L839 317 L838.5 327 L832 332.4 L824 336.6 L838 349 L847 361.4 L854 380.6 L858.3 403.3 L857.5 412 L860 427.7 L863.6 443.4 L865.3 486 L861.6 541.6 L864.4 590 L864.3 596 L858 611.6 L861 627.4 L861 646.4 L854.8 659 L848.5 662.2 L848.5 690.6 L845.3 716 L706.5 716 L705 696 L706.5 663 L703 616 L701.5 596 L696 590 L694 575 L696 560 L697 541.6 L699.8 526.7 L694 504 L697.9 480 L691.6 463 L687 460 L683 451.7 L679 440.5 L680 432 L685 426.6 L683 410 L684.5 398.7 L686 390 L677.6 387.5 L677 382 L681.8 376.3 L683 368 L700.5 368 L704.8 375.4 L711 361.4 L718 349.2 L731.8 345 L726.3 333.8 L718 331 L712.3 325.4 L708 319.8 L704 315.7 L704.6 304.5 L708 294.7 L702.6 287.8 L699.8 272.4 L694 262 Z"/></clipPath></defs><path d="M692 251 L696 247 L705 248 L714 242 L719 238 L725 235.5 L735 235.5 L740 232.7 L746 238 L755.5 248.7 L761 254 L765 247 L774 240 L785 237 L796 233.4 L804 235.5 L810 239 L818 240.3 L828 246 L839 254 L843 258.5 L841 267 L837 272.4 L835 286 L832.5 307 L836 309 L839 317 L838.5 327 L832 332.4 L824 336.6 L838 349 L847 361.4 L854 380.6 L858.3 403.3 L857.5 412 L860 427.7 L863.6 443.4 L865.3 486 L861.6 541.6 L864.4 590 L864.3 596 L858 611.6 L861 627.4 L861 646.4 L854.8 659 L848.5 662.2 L848.5 690.6 L845.3 716 L706.5 716 L705 696 L706.5 663 L703 616 L701.5 596 L696 590 L694 575 L696 560 L697 541.6 L699.8 526.7 L694 504 L697.9 480 L691.6 463 L687 460 L683 451.7 L679 440.5 L680 432 L685 426.6 L683 410 L684.5 398.7 L686 390 L677.6 387.5 L677 382 L681.8 376.3 L683 368 L700.5 368 L704.8 375.4 L711 361.4 L718 349.2 L731.8 345 L726.3 333.8 L718 331 L712.3 325.4 L708 319.8 L704 315.7 L704.6 304.5 L708 294.7 L702.6 287.8 L699.8 272.4 L694 262 Z" fill="url(#sg)"/><path d="M692 251 L696 247 L705 248 L714 242 L719 238 L725 235.5 L735 235.5 L740 232.7 L746 238 L755.5 248.7 L761 254 L765 247 L774 240 L785 237 L796 233.4 L804 235.5 L810 239 L818 240.3 L828 246 L839 254 L843 258.5 L841 267 L837 272.4 L835 286 L832.5 307 L836 309 L839 317 L838.5 327 L832 332.4 L824 336.6 L838 349 L847 361.4 L854 380.6 L858.3 403.3 L857.5 412 L860 427.7 L863.6 443.4 L865.3 486 L861.6 541.6 L864.4 590 L864.3 596 L858 611.6 L861 627.4 L861 646.4 L854.8 659 L848.5 662.2 L848.5 690.6 L845.3 716 L706.5 716 L705 696 L706.5 663 L703 616 L701.5 596 L696 590 L694 575 L696 560 L697 541.6 L699.8 526.7 L694 504 L697.9 480 L691.6 463 L687 460 L683 451.7 L679 440.5 L680 432 L685 426.6 L683 410 L684.5 398.7 L686 390 L677.6 387.5 L677 382 L681.8 376.3 L683 368 L700.5 368 L704.8 375.4 L711 361.4 L718 349.2 L731.8 345 L726.3 333.8 L718 331 L712.3 325.4 L708 319.8 L704 315.7 L704.6 304.5 L708 294.7 L702.6 287.8 L699.8 272.4 L694 262 Z" fill="url(#shx)"/><g fill="#e83010"><circle cx="695" cy="251" r="3"/><circle cx="706" cy="247" r="3.5"/><circle cx="716" cy="242" r="3"/><circle cx="727" cy="238" r="3.5"/><circle cx="739" cy="235" r="3"/><circle cx="748" cy="240" r="2.5"/><circle cx="770" cy="243" r="3"/><circle cx="781" cy="238" r="3"/><circle cx="797" cy="235" r="3.5"/><circle cx="812" cy="239" r="3"/><circle cx="826" cy="245" r="3"/><circle cx="838" cy="252" r="3"/></g><g fill="#7a1200" opacity=".55" filter="url(#bl)"><circle cx="712" cy="258" r="5"/><circle cx="728" cy="266" r="6"/><circle cx="745" cy="262" r="5"/><circle cx="722" cy="278" r="4"/><circle cx="752" cy="276" r="4"/><circle cx="787" cy="258" r="6"/><circle cx="805" cy="266" r="5"/><circle cx="822" cy="262" r="5"/><circle cx="798" cy="280" r="4"/><circle cx="828" cy="280" r="4"/><circle cx="700" cy="268" r="3"/><circle cx="735" cy="250" r="4"/><circle cx="812" cy="249" r="4"/></g><g fill="none" stroke="#7a3a00" stroke-opacity=".6" stroke-width="1.5"><path d="M710 305 Q716 303 720 306"/><path d="M790 306 Q800 303 812 307"/><path d="M800 318 Q806 322 812 318"/></g><ellipse cx="837" cy="318" rx="4" ry="9" fill="#e89010"/><path d="M788 350 Q808 362 828 350" fill="none" stroke="#6a4a00" stroke-opacity=".45" stroke-width="2.5" stroke-dasharray="3 2"/><g clip-path="url(#sc)" filter="url(#bl)"><path d="M700 440 Q712 500 716 560 Q722 620 728 660 L708 700 L700 600 Z" fill="#000" fill-opacity="0.35"/><path d="M820 450 Q814 520 810 600 L830 620 L850 560 L852 480 Z" fill="#000" fill-opacity="0.18"/><path d="M735 300 L760 300 L770 340 L752 345 Z" fill="#000" fill-opacity="0.25"/><path d="M712 350 Q722 352 716 380 Q710 420 706 440 L700 420 Z" fill="#000" fill-opacity="0.3"/><path d="M790 330 Q820 345 830 380 L830 410 L810 400 Z" fill="#000" fill-opacity="0.15"/><path d="M690 250 Q740 290 765 260 L765 290 Q730 300 700 290 Z" fill="#000" fill-opacity="0.15"/><path d="M770 260 Q800 300 840 270 L838 295 Q800 300 775 290 Z" fill="#000" fill-opacity="0.12"/></g><g clip-path="url(#sc)" filter="url(#bl)" fill="none" stroke="#000" stroke-opacity=".35" stroke-width="3.5"><path d="M722 345 Q712 380 712 420"/><path d="M745 470 Q742 520 748 620"/><path d="M770 450 Q766 520 772 610"/><path d="M795 440 Q800 530 796 640"/><path d="M840 460 Q842 540 846 640"/><path d="M790 345 Q800 380 806 420"/><path d="M760 300 Q745 330 740 360"/><path d="M720 250 Q740 270 760 260"/><path d="M785 250 Q810 270 835 262"/><path d="M730 655 Q760 700 800 700"/><path d="M800 650 Q830 690 845 700"/><path d="M712 660 L716 716"/><path d="M830 690 L835 716"/><path d="M760 690 L762 716"/><path d="M790 690 L792 716"/></g><g clip-path="url(#sc)" filter="url(#bl)" fill="none" stroke="#fff" stroke-opacity=".28" stroke-width="5"><path d="M758 450 Q756 540 760 600"/><path d="M735 470 Q732 540 738 620"/><path d="M806 470 Q808 540 810 620"/><path d="M752 360 Q760 390 752 410"/><path d="M845 380 Q850 420 852 450"/><path d="M760 445 Q760 455 770 455"/><path d="M778 650 Q790 660 800 670"/></g><g clip-path="url(#sc)" fill="none" stroke="#002a10" stroke-opacity=".45" stroke-width="2.2"><path d="M787.7 334 Q801.6 356 808.6 382 T812 408.5"/><path d="M735 335 Q720 350 712 372 T705 420"/><path d="M714.7 435.6 Q713.7 485.8 718.4 541.6 T724 590"/><path d="M731.4 435.6 Q734.2 485.8 740.7 541.6 T744.4 590"/><path d="M763 445 Q766.7 485.8 770.5 541.6 T774.2 590"/><path d="M781.6 441 Q785.3 485.8 789 541.6"/><path d="M800 437 Q807.7 485.8 811.4 560"/><path d="M846.7 485.8 L850.5 541.6 L852 600"/><path d="M743.5 560 L749 614"/><path d="M765 560 L769 596"/><path d="M819.6 560 Q821.4 620 821.4 668.8"/><path d="M834 560 Q837.7 620 837.7 668.8"/><path d="M704 500 Q708 560 712 640"/><path d="M752 660 Q760 690 775 700"/><path d="M720 690 L724 716"/><path d="M800 705 L802 716"/></g><g clip-path="url(#sc)" fill="none" stroke="#ffffff" stroke-opacity=".22" stroke-width="2.5"><path d="M717 437 Q716 487 721 542 T727 590"/><path d="M734 437 Q737 487 743.5 542 T747 590"/><path d="M766 447 Q770 487 773.5 542 T777 590"/><path d="M803 439 Q811 487 814.5 560"/><path d="M823 560 Q824.5 620 824.5 668"/></g><g fill="#d0fff0" opacity=".35"><circle cx="833.0" cy="470" r="1.1"/><circle cx="833.1" cy="482" r="1.1"/><circle cx="833.3" cy="494" r="1.1"/><circle cx="833.5" cy="506" r="1.1"/><circle cx="833.6" cy="518" r="1.1"/><circle cx="833.8" cy="530" r="1.1"/><circle cx="833.9" cy="542" r="1.1"/><circle cx="834.0" cy="554" r="1.1"/><circle cx="834.2" cy="566" r="1.1"/><circle cx="834.4" cy="578" r="1.1"/><circle cx="834.5" cy="590" r="1.1"/><circle cx="834.6" cy="602" r="1.1"/><circle cx="834.8" cy="614" r="1.1"/><circle cx="835.0" cy="626" r="1.1"/><circle cx="835.1" cy="638" r="1.1"/><circle cx="835.2" cy="650" r="1.1"/><circle cx="835.4" cy="662" r="1.1"/><circle cx="835.5" cy="674" r="1.1"/></g><path d="M680 370 L700 369 L703 376 L686 390 L678 386 Z" fill="#f0e020" opacity=".7"/><path d="M683 392 L690 392 L690 428 L684 428 Z" fill="#e8e030" opacity=".5" filter="url(#bl)"/><path d="M833 366 L845 366 L846 410 L834 412 Z" fill="#f0e040" opacity=".5"/><path d="M790 300 Q805 296 822 305 Q828 320 812 332 Q798 336 788 325 Z" fill="#f0a040" opacity=".35" filter="url(#bl)"/><path d="M712 296 Q725 294 732 305 Q730 322 718 326 Q708 320 708 305 Z" fill="#f0a040" opacity=".3" filter="url(#bl)"/><path d="M745 355 Q765 345 788 352 Q800 390 785 408 L738 408 Q735 380 745 355Z" fill="#fff070" opacity=".35" filter="url(#bl)"/><ellipse cx="812" cy="385" rx="14" ry="28" fill="#3a3000" opacity=".22" filter="url(#bl)"/><g fill="none" stroke="#5a4a00" stroke-opacity=".5" stroke-width="1.4"><path d="M795 368 Q810 376 828 368"/><path d="M797 384 Q812 392 828 384"/><path d="M800 398 Q812 404 826 398"/></g><g clip-path="url(#sc)"><rect x="670" y="225" width="200" height="495" filter="url(#nz)" opacity=".16"/></g><g clip-path="url(#sc)" fill="none" stroke="#3a0600" stroke-opacity=".7" stroke-width="1.7"><path d="M705 262 Q720 252 735 258 Q748 268 742 280"/><path d="M725 245 Q740 240 752 252"/><path d="M780 262 Q795 250 812 262 Q820 275 812 285"/><path d="M800 242 Q815 238 828 252"/><path d="M712 282 Q735 292 760 282"/><path d="M780 290 Q805 295 832 286"/><path d="M712 252 Q722 246 730 248"/><path d="M818 250 Q830 258 836 270"/><path d="M705 247 Q712 240 720 244"/><path d="M722 252 Q730 245 740 250 Q745 258 738 265"/><path d="M745 240 Q752 236 758 244"/><path d="M700 262 Q708 268 716 262"/><path d="M725 275 Q735 270 748 276"/><path d="M755 258 Q760 265 757 275"/><path d="M780 250 Q790 242 800 248"/><path d="M805 245 Q815 240 822 250 Q826 260 818 268"/><path d="M790 262 Q800 270 808 262"/><path d="M828 258 Q835 265 832 276"/><path d="M785 276 Q800 282 815 276"/></g><g fill="none" stroke="#050505" stroke-width="2" stroke-linejoin="round"><path d="M762.5 254 L763.2 281 L770 286 L772.3 292.5 L766.7 301 L744.4 301 L739.5 308 L738.8 324.6 L745.8 333 L751.4 334.4 L757 337.2 L765.3 335.8 L773.7 327.4 L777.9 316.3 L776.5 294"/><path d="M775 243 L772.3 266.8 L773.7 280"/><path d="M776.5 282 L790.4 283.6 L796 278"/><path d="M776.5 294 L779 316 L777 329 L767 337 L760 342"/><path d="M830.9 306.5 L829.5 321.8 L823.9 330.2 L818.3 334.4"/><path d="M830.9 364 L846.2 363.7 L847.9 412 M830.9 364 L832 415.5"/><path d="M815.6 424.2 L829.5 415.5 L853 412 L857.5 420.7 L855.7 434.7 L841.8 443.4 L822.6 448.6 L820.7 472.8 L817 491.4 L815 504 L813.3 534 L811.4 560 L809.5 590 L807 596.3 L797.9 598 L794.2 603.5 L796 612.6 L794.2 629 L790.6 647 L787 663.4 L783.4 672.4 L774.3 683.3 L765.2 687 L758 692.4 L745.3 690.6 L738 687 L733.5 677.9 L734.4 665 L738 654 L734.4 650.7 L729 639.8 L728 630.7 L723.5 627 L719 618 L723.5 603 L719 596 L716.5 582.6 L712.8 560 L710 538 L707.2 508 L703.5 493 L699.8 485.8 L697.9 456 L688.6 454"/><path d="M730 410 L782.4 412 L785 429.4 L794.7 431.2 L815.6 424.2"/><path d="M822.6 446.7 L837.4 441 L848.6 435.6 L856 430"/><path d="M726.5 632.8 L736 631 L746.4 629.5 L759.7 619.5 L768 624 L776.4 629.5 L790 636"/><path d="M791.6 640 L794.8 655.9 L801 668.5 L812.2 678 L826.4 681 L835.9 674.8 L842.2 655.9 L845.3 635.3 L848.5 611.6 L848.5 580"/><path d="M818.5 649.5 L821.6 668.5 L831 674.8 L837.4 673.3 L842.2 654.3"/><path d="M780.5 687.5 L796.4 700 L812.2 703.3 L831 701.7 L845.3 697"/><path d="M768 614.8 L775.8 619.5 L791.6 614.8"/><path d="M799.5 629 L807.4 624.3 L802.7 595.8"/><path d="M744 600 Q752 615 750 630"/><path d="M724.9 345.6 L706.7 369"/><path d="M747.6 347.4 L737 366 L730 408.5"/><path d="M700 450 L703 470"/><path d="M708 700 Q740 705 760 712"/><path d="M829.5 338.6 L843.4 358 L849 377.6"/></g></svg>
</div>
<svg class="a" style="left:300px;top:652px;" width="36" height="40" viewBox="0 0 36 40"><path d="M30.4 8 V33" stroke="#1a3aff" stroke-width="2"/><path d="M28 9 L30.4 5.5 L33 9Z" fill="#1a3aff"/><path d="M30 32 H9" stroke="#ff2a00" stroke-width="2"/><path d="M10 29.5 L6.5 31.8 L10 34Z" fill="#ff2a00"/><path d="M30 33 L24 35 L18 36" stroke="#20f020" stroke-width="2"/><path d="M19 33.5 L15.5 36.5 L19.5 38.5Z" fill="#20f020"/></svg>
<div class="a dtitle" style="left:35px;top:720px;width:1405px"><div class="tx a">控制台</div></div>
<svg class="a" style="left:1411px;top:725px" width="9" height="9" viewBox="0 0 9 9"><rect x="3.2" y="0.7" width="5" height="4.2" fill="none" stroke="#000" stroke-width="1.4"/><rect x="0.7" y="3.5" width="5.2" height="4.8" fill="#f4f4f4" stroke="#000" stroke-width="1.4"/></svg>
<svg class="a" style="left:1427px;top:726px" width="9" height="8" viewBox="0 0 9 8"><path d="M0.8 0.8L8.2 7.2M8.2 0.8L0.8 7.2" stroke="#000" stroke-width="1.6"/></svg>
<div class="a" style="left:35px;top:742px;width:1403px;height:72px;background:#fff;border:1px solid #c4c4c4;border-right-color:#e2e2e2;border-bottom-color:#e2e2e2"></div>
<div class="a" style="left:36px;top:743px;width:1386px;height:70px;overflow:hidden">
<div class="a con" style="left:6px;top:-2px"><span class="l">[GL</span>过滤器<span class="l">]</span>初始化</div>
<div class="a con" style="left:6px;top:12px"><span class="l">[GL</span>过滤器<span class="l">]</span>初始化</div>
<div class="a con" style="left:6px;top:26px"><span class="l">[GL</span>过滤器<span class="l">]</span>初始化</div>
<div class="a con" style="left:6px;top:40px"><span class="l">[GL</span>过滤器<span class="l">]</span>初始化</div>
<div class="a con" style="left:6px;top:54px"><span class="l">[GL</span>过滤器<span class="l">]</span>初始化</div>
</div>
<div class="a" style="left:1421px;top:743px;width:16px;height:70px;background:#f0f0f0"></div>
<svg class="a" style="left:1425px;top:750px;" width="8" height="5" viewBox="0 0 8 5"><path d="M0 5 L4 0.5 L8 5Z" fill="#555"/></svg>
<svg class="a" style="left:1425px;top:803px;" width="8" height="5" viewBox="0 0 8 5"><path d="M0 0 L4 4.5 L8 0Z" fill="#555"/></svg>
<div class="a" style="left:1422px;top:767px;width:14px;height:27px;border:1px solid #959595;border-radius:2px;background:linear-gradient(90deg,#f4f4f4,#e2e2e2)"></div>
<div class="a" style="left:1426px;top:776px;width:6px;height:7px;background:repeating-linear-gradient(#666 0 1px,transparent 1px 2px)"></div>
<div class="a" style="left:35px;top:817px;width:1403px;height:19px;background:#fff"></div>
<div class="a con" style="left:37px;top:819px;font-size:13px">命令:</div>
</body></html>
